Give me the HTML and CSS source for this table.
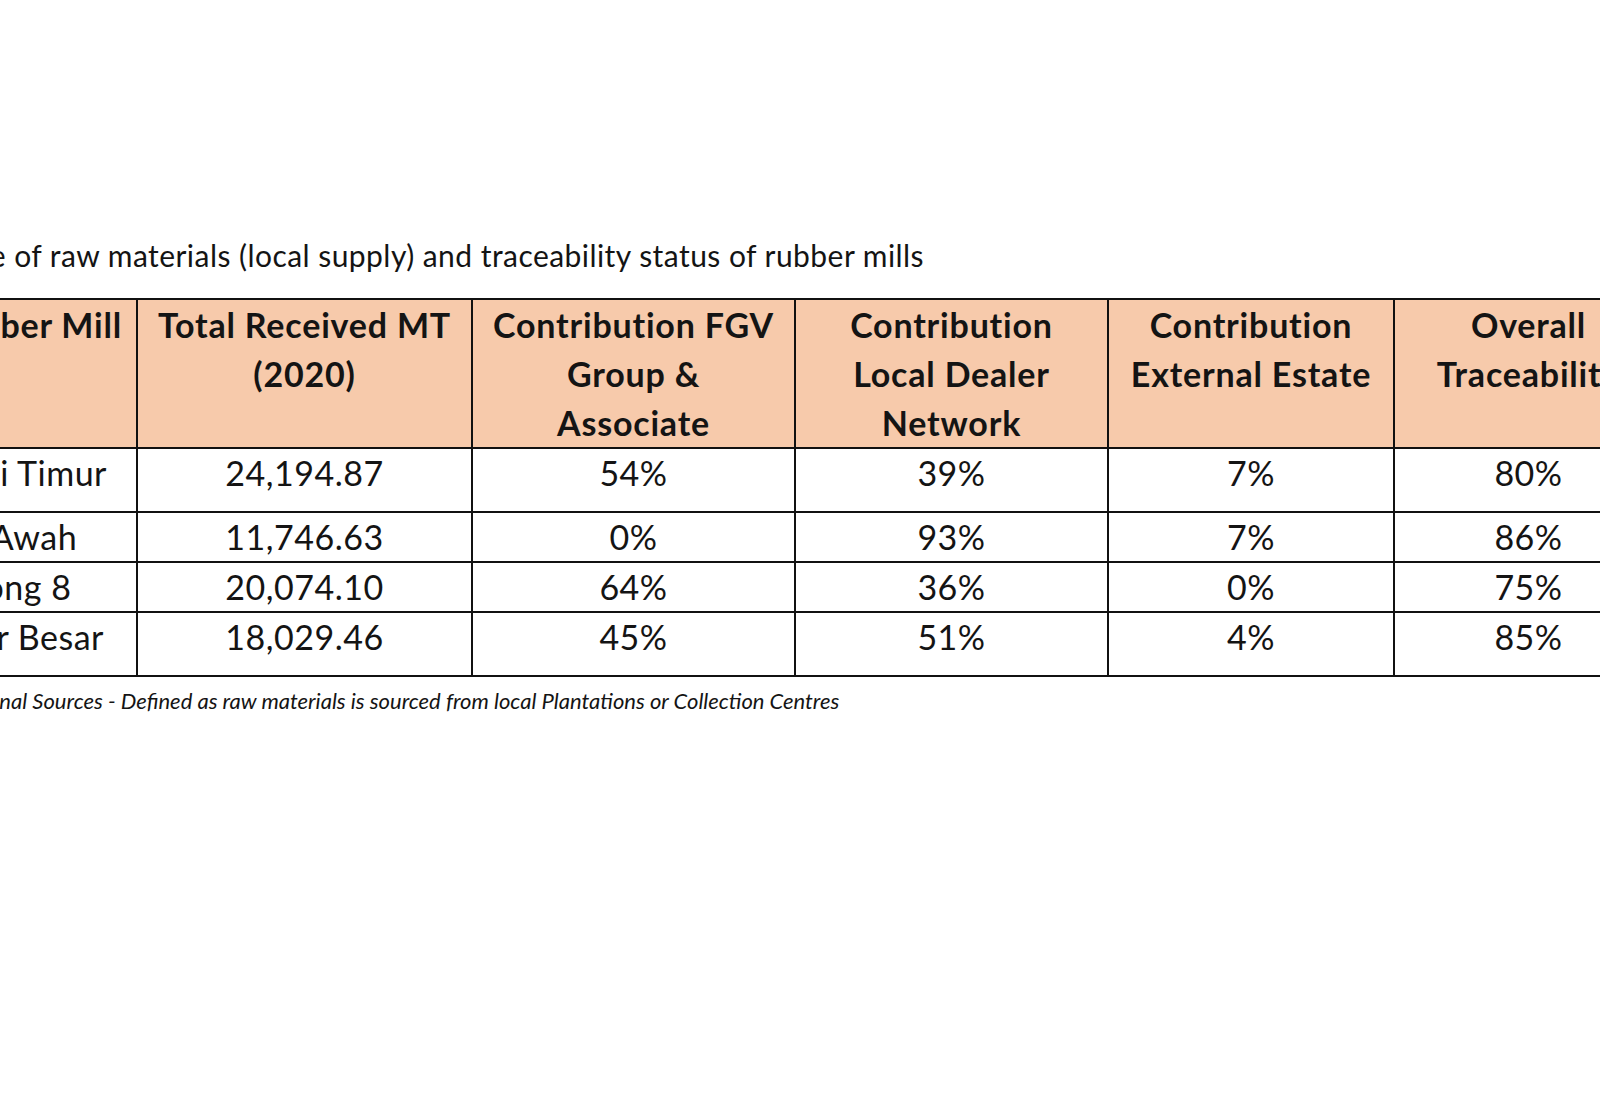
FILE: index.html
```html
<!DOCTYPE html>
<html lang="en">
<head>
<meta charset="utf-8">
<title>Rubber mills traceability</title>
<link rel="stylesheet" href="styles.css">
</head>
<body>
<div class="page">
  <p class="caption">Table 3: Source of raw materials (local supply) and traceability status of rubber mills</p>
  <table class="mills">
    <colgroup>
      <col class="w-mill">
      <col class="w-total">
      <col class="w-fgv">
      <col class="w-dealer">
      <col class="w-estate">
      <col class="w-overall">
    </colgroup>
    <thead>
      <tr>
        <th class="mill">Rubber Mill</th>
        <th>Total Received MT<br>(2020)</th>
        <th>Contribution FGV<br>Group &amp;<br>Associate</th>
        <th>Contribution<br>Local Dealer<br>Network</th>
        <th>Contribution<br>External Estate</th>
        <th>Overall<br>Traceability</th>
      </tr>
    </thead>
    <tbody>
      <tr class="tall">
        <td class="mill mill--timur">Chini Timur</td>
        <td>24,194.87</td>
        <td>54%</td>
        <td>39%</td>
        <td>7%</td>
        <td>80%</td>
      </tr>
      <tr>
        <td class="mill mill--awah">Bukit Awah</td>
        <td>11,746.63</td>
        <td>0%</td>
        <td>93%</td>
        <td>7%</td>
        <td>86%</td>
      </tr>
      <tr>
        <td class="mill mill--keratong">Keratong 8</td>
        <td>20,074.10</td>
        <td>64%</td>
        <td>36%</td>
        <td>0%</td>
        <td>75%</td>
      </tr>
      <tr class="tall">
        <td class="mill mill--besar">Pasir Besar</td>
        <td>18,029.46</td>
        <td>45%</td>
        <td>51%</td>
        <td>4%</td>
        <td>85%</td>
      </tr>
    </tbody>
  </table>
  <p class="note">*External Sources - Defined as raw materials is sourced from local Plantations or Collection Centres</p>
</div>
</body>
</html>
```

FILE: styles.css
```css
html, body {
  margin: 0;
  padding: 0;
  background: #ffffff;
}

body {
  font-family: "Lato", "Liberation Sans", sans-serif;
  color: #141414;
  width: 1600px;
  height: 1120px;
  overflow: hidden;
}

.page {
  padding-top: 240px;
  margin-left: -100px;
}

.caption {
  margin: 0 0 28px -100px;
  font-size: 30px;
  line-height: 30px;
  letter-spacing: 0.45px;
  white-space: nowrap;
}

.mills {
  border-collapse: collapse;
  table-layout: fixed;
  width: 1762px;
}

.w-mill { width: 236px; }
.w-total { width: 335px; }
.w-fgv { width: 323px; }
.w-dealer { width: 313px; }
.w-estate { width: 286px; }
.w-overall { width: 269px; }

.mills th,
.mills td {
  border: 2px solid #111;
  padding: 0;
  text-align: center;
  vertical-align: top;
  font-size: 34px;
  white-space: nowrap;
}

.mills th {
  background: #f7caab;
  font-weight: 700;
  line-height: 49px;
  letter-spacing: 0.8px;
}

.mills td {
  font-weight: 400;
  line-height: 48px;
  letter-spacing: 0.5px;
}

.mills tr.tall td {
  padding-bottom: 14px;
}

.mills .mill {
  text-align: right;
  padding-right: 14px;
}

.mills .mill--timur { padding-right: 29px; }
.mills .mill--awah { padding-right: 64px; }
.mills .mill--keratong { padding-right: 71px; }
.mills .mill--besar { padding-right: 32px; }

.note {
  margin: 11px 0 0 43px;
  font-size: 22px;
  font-style: italic;
  line-height: 26px;
  white-space: nowrap;
}
```
